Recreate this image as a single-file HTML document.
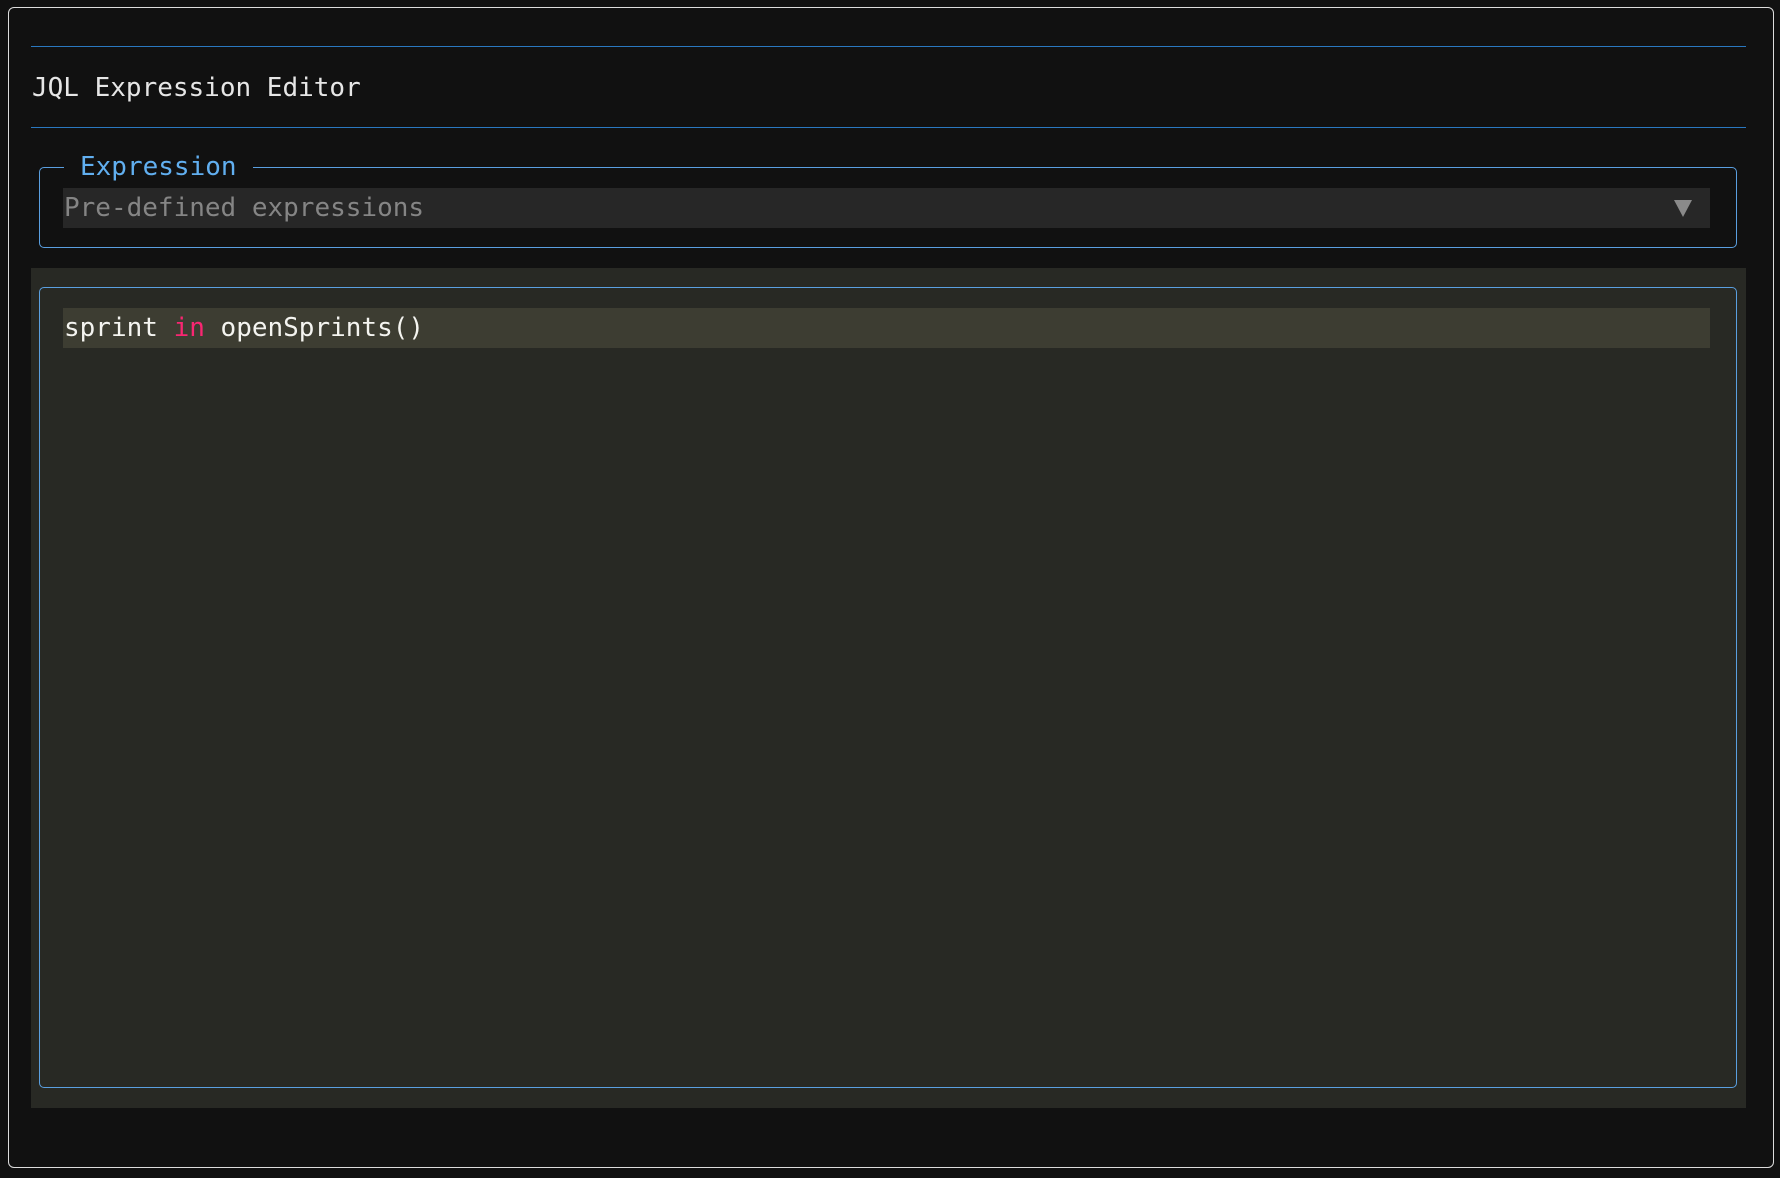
<!DOCTYPE html>
<html><head><style>
html,body{margin:0;padding:0;background:#111;width:1780px;height:1178px;overflow:hidden}
*{box-sizing:border-box}
body{font-family:"DejaVu Sans Mono","Liberation Mono",monospace;position:relative}
.a{position:absolute}
</style></head><body>
<div class="a" style="left:8px;top:7px;width:1766px;height:1161px;border:1.5px solid #ddd;border-radius:6px"></div>
<div class="a" style="left:31px;top:46px;width:1715px;height:1px;background:#2a78c0"></div>
<div class="a" style="left:32px;top:70px;font-size:26px;line-height:36px;color:#e6e6e6;white-space:pre">JQL Expression Editor</div>
<div class="a" style="left:31px;top:127px;width:1715px;height:1px;background:#2a78c0"></div>
<div class="a" style="left:39px;top:167px;width:1698px;height:81px;border:1.5px solid #5a9fe0;border-radius:5px"></div>
<div class="a" style="left:64px;top:150px;padding:0 16px;background:#111;font-size:26px;line-height:34px;color:#61aff0">Expression</div>
<div class="a" style="left:63px;top:188px;width:1647px;height:40px;background:#272727"></div>
<div class="a" style="left:64px;top:190px;font-size:26px;line-height:36px;color:#858585;white-space:pre">Pre-defined expressions</div>
<svg class="a" style="left:1673px;top:199px" width="20" height="19"><polygon points="1,1 19,1 10,18" fill="#8a8a8a"/></svg>
<div class="a" style="left:31px;top:268px;width:1715px;height:840px;background:#282924"></div>
<div class="a" style="left:39px;top:287px;width:1698px;height:801px;border:1.5px solid #5a9fe0;border-radius:5px"></div>
<div class="a" style="left:63px;top:308px;width:1647px;height:40px;background:#3d3d32"></div>
<div class="a" style="left:64px;top:310px;font-size:26px;line-height:36px;color:#f4f4f0;white-space:pre">sprint <span style="color:#f92672">in</span> openSprints()</div>
</body></html>
